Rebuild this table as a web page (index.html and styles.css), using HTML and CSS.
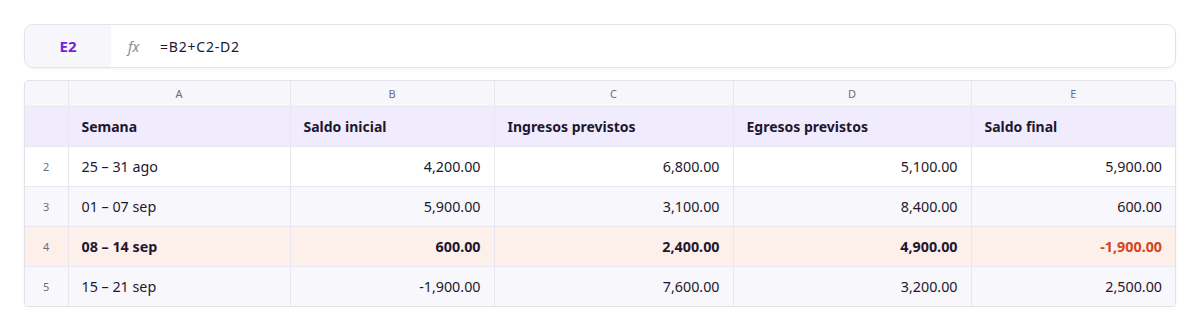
FILE: index.html
```html
<!DOCTYPE html>
<html lang="es">
<head>
<meta charset="utf-8">
<title>Flujo de caja semanal</title>
<link rel="stylesheet" href="styles.css">
</head>
<body>
<div class="sheet">
  <div class="formula-bar">
    <div class="cell-ref">E2</div>
    <div class="fx">fx</div>
    <div class="formula">=B2+C2-D2</div>
  </div>
  <div class="grid-wrap">
    <table class="grid">
      <colgroup>
        <col class="c-num"><col class="c-a"><col class="c-b"><col class="c-c"><col class="c-d"><col class="c-e">
      </colgroup>
      <thead>
        <tr class="col-letters">
          <th></th><th>A</th><th>B</th><th>C</th><th>D</th><th>E</th>
        </tr>
      </thead>
      <tbody>
        <tr class="head-row">
          <td class="rn"></td>
          <td>Semana</td><td>Saldo inicial</td><td>Ingresos previstos</td><td>Egresos previstos</td><td>Saldo final</td>
        </tr>
        <tr class="row even">
          <td class="rn">2</td><td>25 – 31 ago</td><td class="num">4,200.00</td><td class="num">6,800.00</td><td class="num">5,100.00</td><td class="num">5,900.00</td>
        </tr>
        <tr class="row odd">
          <td class="rn">3</td><td>01 – 07 sep</td><td class="num">5,900.00</td><td class="num">3,100.00</td><td class="num">8,400.00</td><td class="num">600.00</td>
        </tr>
        <tr class="row alert">
          <td class="rn">4</td><td>08 – 14 sep</td><td class="num">600.00</td><td class="num">2,400.00</td><td class="num">4,900.00</td><td class="num neg">-1,900.00</td>
        </tr>
        <tr class="row odd">
          <td class="rn">5</td><td>15 – 21 sep</td><td class="num">-1,900.00</td><td class="num">7,600.00</td><td class="num">3,200.00</td><td class="num">2,500.00</td>
        </tr>
      </tbody>
    </table>
  </div>
</div>
</body>
</html>
```
FILE: styles.css
```css
html, body {
  margin: 0;
  padding: 0;
  background: #ffffff;
}
body {
  font-family: "Noto Sans", "Open Sans", sans-serif;
  color: #1d1830;
}
.sheet {
  padding: 24px 24px 0 24px;
  display: flex;
  flex-direction: column;
  gap: 12px;
}
.formula-bar {
  height: 42px;
  border: 1px solid #e3e2e8;
  border-radius: 9px;
  display: flex;
  align-items: center;
  overflow: hidden;
  box-shadow: 0 1px 2px rgba(30, 20, 60, 0.05);
}
.cell-ref {
  width: 86px;
  height: 100%;
  background: #f7f6fa;
  display: flex;
  align-items: center;
  justify-content: center;
  font-weight: 700;
  font-size: 15px;
  color: #7324d4;
}
.fx {
  font-family: "Noto Sans", sans-serif;
  font-style: italic;
  font-size: 14px;
  color: #8a8796;
  margin-left: 17px;
  width: 32px;
}
.formula {
  font-size: 14px;
  color: #1d1830;
  letter-spacing: 0.8px;
}
.grid-wrap {
  border: 1px solid #e3e2e8;
  border-radius: 4px;
  overflow: hidden;
  box-shadow: 0 1px 2px rgba(30, 20, 60, 0.05);
}
.grid {
  width: 100%;
  border-collapse: collapse;
  table-layout: fixed;
  font-size: 14px;
}
.c-num { width: 43px; }
.c-a { width: 222px; }
.c-b { width: 204px; }
.c-c { width: 239px; }
.c-d { width: 238px; }
.c-e { width: auto; }
.grid th, .grid td {
  border: 1px solid #e8e6ee;
  padding: 0 13px;
  white-space: nowrap;
}
.grid tr > :first-child { border-left: none; }
.grid tr > :last-child { border-right: none; }
.grid thead tr:first-child > * { border-top: none; }
.grid tbody tr:last-child > * { border-bottom: none; }
.col-letters th {
  height: 25px;
  background: #f7f6fa;
  font-weight: 400;
  font-size: 11px;
  color: #6f6b7e;
  text-align: center;
}
.head-row td {
  height: 39px;
  background: #f1ecfd;
  font-weight: 700;
  color: #1d1830;
}
.row { font-size: 14.3px; }
.row td { height: 39px; }
.even td { background: #ffffff; }
.odd td { background: #f8f7fb; }
.alert td { background: #fdefe9; font-weight: 700; }
.grid tr td.rn {
  padding: 0;
  text-align: center;
  font-size: 11px;
  font-weight: 400;
  color: #6f6b7e;
}
.num { text-align: right; }
.neg { color: #d4451c; }
```
